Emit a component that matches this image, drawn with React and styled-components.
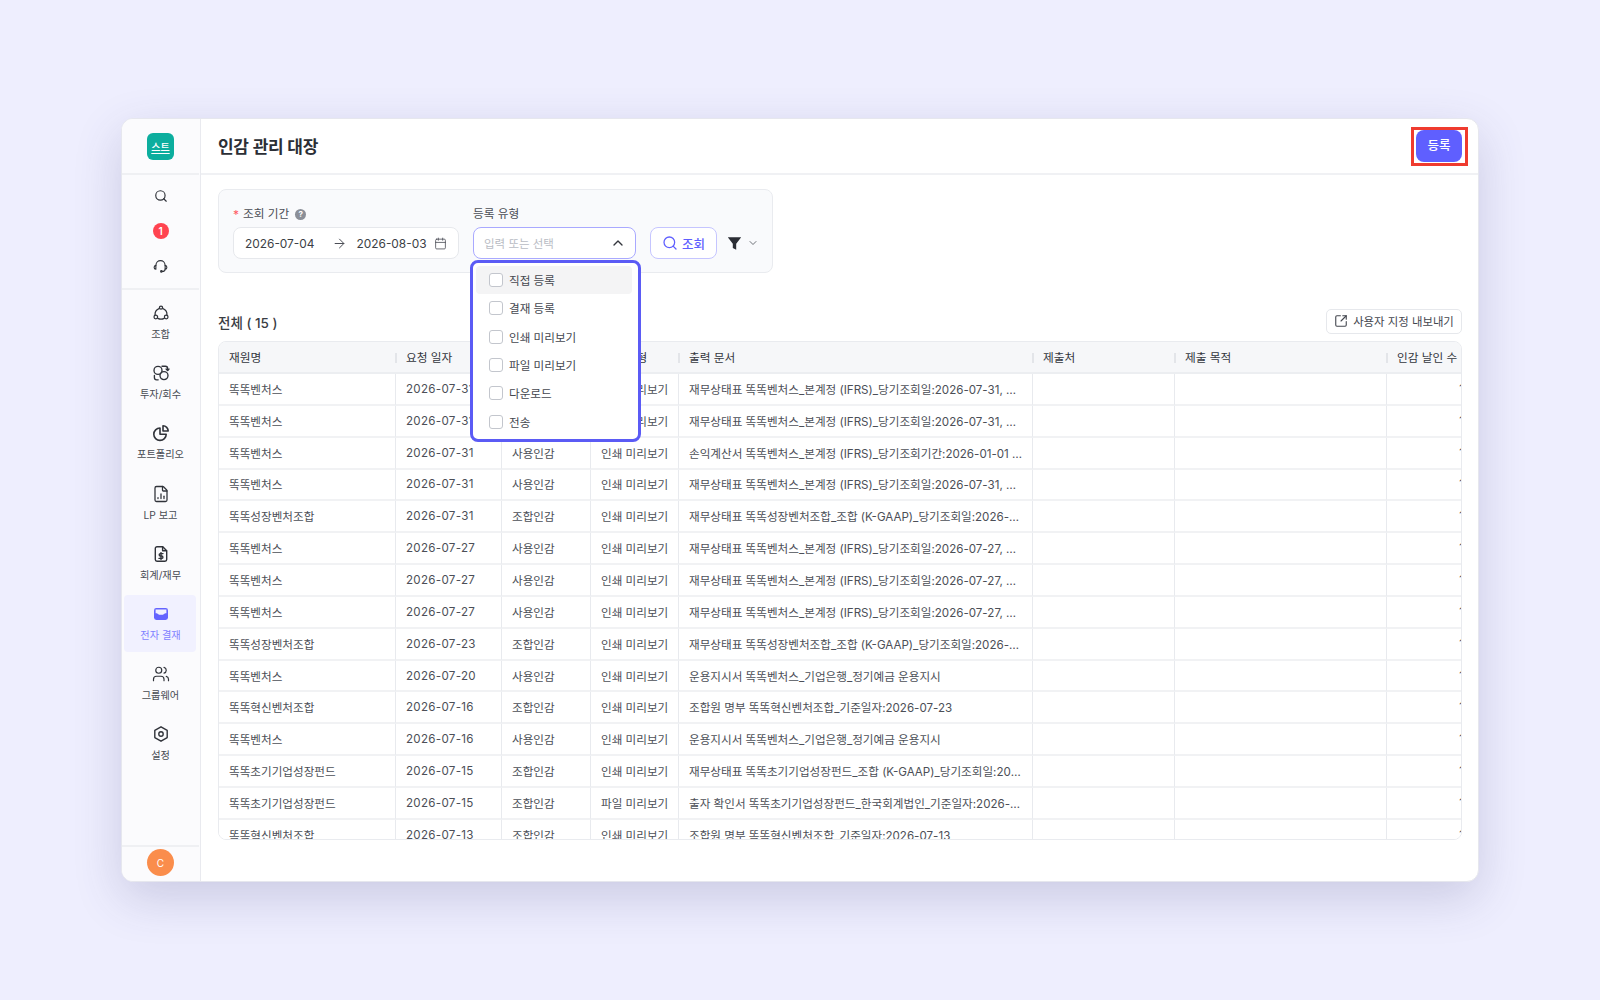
import React from 'react';
import styled, { createGlobalStyle } from 'styled-components';
import { Search, ArrowRight, Calendar, ChevronUp, ChevronDown, SquareArrowOutUpRight, FileChartColumn, Users } from 'lucide-react';

const Global = createGlobalStyle`
  * { box-sizing: border-box; }
  html, body { margin: 0; padding: 0; }
  body { font-family: Inter, "Noto Sans CJK KR", "Noto Sans", sans-serif; background: #eeeefe; color: #333740; }
`;

const Page = styled.div`
  width: 1600px; height: 1000px; display: flex; align-items: flex-start; justify-content: center; padding-top: 118px;
  background: #eeeefe; overflow: hidden;
`;
const Window = styled.div`
  width: 1358px; height: 764px; display: flex; background: #fff; border-radius: 12px;
  border: 1px solid #e6e7ee; overflow: hidden; box-shadow: 0 16px 48px rgba(60, 60, 120, 0.2);
`;
const Sidebar = styled.aside`
  width: 79px; flex: none; display: flex; flex-direction: column; background: #fbfbfd; border-right: 1px solid #e9eaef;
  padding-right: 1px;
`;
const LogoArea = styled.div`
  height: 56px; flex: none; display: flex; align-items: center; justify-content: center; border-bottom: 2px solid #eff0f3;
`;
const Logo = styled.div`
  width: 27px; height: 27px; border-radius: 6px; background: #0cae9e; color: #fff; font-size: 10px; font-weight: 500;
  display: flex; align-items: center; justify-content: center; text-decoration: underline; text-underline-offset: 2px;
`;
const Tools = styled.div`
  display: flex; flex-direction: column; padding: 3px 0; border-bottom: 2px solid #eff0f3;
`;
const Tool = styled.div`
  height: 35.5px; display: flex; align-items: center; justify-content: center; color: #2f3239;
`;
const Badge = styled.span`
  width: 16px; height: 16px; border-radius: 50%; background: #ff4450; color: #fff; font-size: 10px; font-weight: 600;
  display: flex; align-items: center; justify-content: center;
`;
const Nav = styled.nav`
  flex: 1; display: flex; flex-direction: column; gap: 3.2px; padding: 4.5px 3px 0 2px;
`;
const NavItem = styled.div`
  height: 57px; border-radius: 4px; display: flex; flex-direction: column; align-items: center; padding: 10px 0 0 1px; gap: 5px;
  background: ${p => (p.$active ? '#f1f1ff' : 'transparent')};
  color: ${p => (p.$active ? '#6464ff' : '#30333a')};
`;
const NavLabel = styled.span`
  font-size: 10.2px; line-height: 14px; color: ${p => (p.$active ? '#7f7fff' : '#484b53')};
`;
const SideFoot = styled.div`
  height: 36px; flex: none; display: flex; align-items: center; justify-content: center; border-top: 2px solid #eff0f3; padding-bottom: 3px;
`;
const Avatar = styled.div`
  width: 27px; height: 27px; border-radius: 50%; background: #fa8d4c; color: #fff; font-size: 10px;
  display: flex; align-items: center; justify-content: center;
`;
const Main = styled.main`
  flex: 1; min-width: 0; display: flex; flex-direction: column;
`;
const Header = styled.header`
  height: 56px; flex: none; display: flex; align-items: center; justify-content: space-between;
  padding: 0 16px 2px 17px; border-bottom: 2px solid #f0f1f4;
`;
const Title = styled.h1`
  margin: 0; font-size: 17px; font-weight: 600; color: #2b2e35; letter-spacing: -0.3px;
`;
const PrimaryWrap = styled.div`
  position: relative; margin-top: 2px;
`;
const Primary = styled.button`
  width: 46px; height: 32px; border: 0; border-radius: 8px; background: #5f5fff; color: #fff; font: 500 12.5px Inter, "Noto Sans CJK KR", sans-serif;
  display: block; padding: 0 0 3px;
`;
const Marker = styled.div`
  position: absolute; left: -5px; top: -3px; right: -6px; bottom: -4px; border: 3px solid #ef3b2f; pointer-events: none;
`;
const Content = styled.div`
  flex: 1; min-height: 0; display: flex; flex-direction: column; padding: 14px 16px 0 17px;
`;
const FilterBox = styled.div`
  position: relative; width: 555px; height: 84px; flex: none; display: flex; align-items: flex-end; gap: 14px;
  padding: 0 0 13px 14px; background: #f9fafc; border: 1px solid #e9ebef; border-radius: 8px;
`;
const Field = styled.div`
  position: relative; flex: none; display: flex; flex-direction: column; gap: 4px;
`;
const FieldLabel = styled.label`
  display: flex; align-items: center; gap: 4px; font-size: 11.7px; line-height: 17px; color: #4b4e56;
`;
const Req = styled.span`
  color: #ff5a63; font-size: 12px;
`;
const Help = styled.span`
  width: 11px; height: 11px; margin-left: 2px; border-radius: 50%; background: #8b8f98; color: #fff; font-size: 8px; font-weight: 700;
  display: flex; align-items: center; justify-content: center;
`;
const RangeInput = styled.div`
  width: 226px; height: 32px; display: flex; align-items: center; padding: 0 0 0 11px; background: #fff; border: 1px solid #e6e8ec;
  border-radius: 8px; font-size: 11.9px; color: #3c3f46; white-space: nowrap;
`;
const RangeArrow = styled.span`
  display: flex; margin: 0 10px 0 17px; color: #4b4e56;
`;
const RangeIcon = styled.span`
  display: flex; margin-left: 7px; color: #4b4e56;
`;
const SelectInput = styled.div`
  width: 163px; height: 32px; display: flex; align-items: center; justify-content: space-between; padding: 0 9px 0 10px;
  background: #fff; border: 1px solid #a9a9ff; border-radius: 8px; font-size: 11.5px; color: #b9bcc4;
`;
const SelectArrow = styled.span`
  display: flex; color: #33363d;
`;
const SearchBtn = styled.button`
  width: 67px; height: 32px; flex: none; display: flex; align-items: center; justify-content: center; gap: 4px; background: #fff;
  border: 1px solid #c5c5ff; border-radius: 8px; color: #5f5fff; font: 500 12.5px Inter, "Noto Sans CJK KR", sans-serif; padding: 0;
`;
const FilterToggle = styled.div`
  height: 32px; flex: none; display: flex; align-items: center; gap: 5px; color: #2b2e35; margin-left: -4px;
`;
const Dropdown = styled.ul`
  position: absolute; left: -3px; top: 54px; width: 171px; height: 182px; margin: 0; padding: 3px 6px 3px 3px; list-style: none; z-index: 5;
  background: #fff; border: 3px solid #5b5bf5; border-radius: 8px; display: flex; flex-direction: column;
`;
const Option = styled.li`
  height: 28.3px; flex: none; display: flex; align-items: center; gap: 6px; padding-left: 13px; border-radius: 4px;
  font-size: 11.6px; color: #44474f; background: ${p => (p.$hover ? '#f4f4f5' : 'transparent')};
`;
const Check = styled.span`
  width: 14px; height: 14px; flex: none; background: #fff; border: 1px solid #c3c6cd; border-radius: 3px;
`;
const TableBar = styled.div`
  height: 25px; flex: none; margin-top: 36px; display: flex; align-items: center; justify-content: space-between;
`;
const Total = styled.div`
  font-size: 13.5px; font-weight: 500; color: #3a3d44;
`;
const Export = styled.button`
  height: 25px; width: 136px; display: flex; align-items: center; justify-content: center; gap: 5px; background: #fff; border: 1px solid #e6e8ec;
  border-radius: 5px; color: #44474f; font: 400 11.4px Inter, "Noto Sans CJK KR", sans-serif; padding: 0 0 1px;
`;
const TableWrap = styled.div`
  margin-top: 7px; width: 1244px; height: 499px; flex: none; overflow: hidden; border: 1px solid #e9ebef; border-radius: 8px;
`;
const Table = styled.table`
  width: 1253px; table-layout: fixed; border-collapse: separate; border-spacing: 0;
`;
const Th = styled.th`
  height: 32px; padding: 0 0 1px 10px; text-align: left; font-size: 11.7px; font-weight: 400; color: #33363d;
  background: #f6f7f9; border-bottom: 2px solid #eceef1; white-space: nowrap; position: relative;
  &:not(:first-child)::before {
    content: ''; position: absolute; left: -1px; top: 11px; width: 2px; height: 10px; background: #e3e5e9;
  }
`;
const Td = styled.td`
  height: 31.85px; padding: 0 8px 0 10px; font-size: 11.6px; color: #4c4f57; background: #fff; white-space: nowrap; overflow: hidden;
  text-overflow: ellipsis; text-align: ${p => (p.$right ? 'right' : 'left')};
  border-bottom: 2px solid #f1f2f4;
  &:not(:last-child) { border-right: 1px solid #e8eaee; }
`;
const DateText = styled.span`
  letter-spacing: 0.3px;
`;

const columns = [
  { w: 177, label: '재원명' }, { w: 106, label: '요청 일자' }, { w: 89, label: '인감 유형' }, { w: 88, label: '출력 유형' },
  { w: 354, label: '출력 문서' }, { w: 142, label: '제출처' }, { w: 212, label: '제출 목적' }, { w: 85, label: '인감 날인 수' },
];
const V = '똑똑벤처스', G = '똑똑성장벤처조합', H = '똑똑혁신벤처조합', C = '똑똑초기기업성장펀드';
const U = '사용인감', J = '조합인감', P = '인쇄 미리보기', F = '파일 미리보기';
const bs = (d) => `재무상태표 똑똑벤처스_본계정 (IFRS)_당기조회일:${d}, 기준 통화:KRW`;
const rows = [
  [V, '2026-07-31', U, P, bs('2026-07-31')],
  [V, '2026-07-31', U, P, bs('2026-07-31')],
  [V, '2026-07-31', U, P, '손익계산서 똑똑벤처스_본계정 (IFRS)_당기조회기간:2026-01-01 ~ 2026-07-31'],
  [V, '2026-07-31', U, P, bs('2026-07-31')],
  [G, '2026-07-31', J, P, '재무상태표 똑똑성장벤처조합_조합 (K-GAAP)_당기조회일:2026-07-31, 기준'],
  [V, '2026-07-27', U, P, bs('2026-07-27')],
  [V, '2026-07-27', U, P, bs('2026-07-27')],
  [V, '2026-07-27', U, P, bs('2026-07-27')],
  [G, '2026-07-23', J, P, '재무상태표 똑똑성장벤처조합_조합 (K-GAAP)_당기조회일:2026-07-23, 기준'],
  [V, '2026-07-20', U, P, '운용지시서 똑똑벤처스_기업은행_정기예금 운용지시'],
  [H, '2026-07-16', J, P, '조합원 명부 똑똑혁신벤처조합_기준일자:2026-07-23'],
  [V, '2026-07-16', U, P, '운용지시서 똑똑벤처스_기업은행_정기예금 운용지시'],
  [C, '2026-07-15', J, P, '재무상태표 똑똑초기기업성장펀드_조합 (K-GAAP)_당기조회일:2026-07-15, 기준'],
  [C, '2026-07-15', J, F, '출자 확인서 똑똑초기기업성장펀드_한국회계법인_기준일자:2026-07-15 기준'],
  [H, '2026-07-13', J, P, '조합원 명부 똑똑혁신벤처조합_기준일자:2026-07-13'],
];
const options = ['직접 등록', '결재 등록', '인쇄 미리보기', '파일 미리보기', '다운로드', '전송'];

const Ico = ({ children, size = 18, sw = 1.3, fill = 'none' }) => (
  <svg width={size} height={size} viewBox="0 0 18 18" fill={fill} stroke="currentColor" strokeWidth={sw} strokeLinecap="round" strokeLinejoin="round">{children}</svg>
);
const Headset = () => (
  <Ico size={17} sw={1.15}><path d="M4.2 8V7.6a4.8 4.8 0 0 1 9.6 0V8" /><path d="M3.8 7.8c-2 .6-2.2 3.9.3 4V8" /><path d="M14.2 7.8c2 .6 2.2 3.9-.3 4V8" /><path d="M13.9 11.8c0 1.4-1.3 2.4-3 2.4" /><circle cx="9.9" cy="14.2" r=".8" /></Ico>
);
const Fund = () => (
  <Ico sw={1.25}><circle cx="9" cy="3.6" r="1.6" /><circle cx="3.8" cy="13" r="1.8" /><circle cx="14.2" cy="13" r="1.8" /><path d="M7 4.6A6.2 6.2 0 0 0 3.1 11" /><path d="M11 4.6A6.2 6.2 0 0 1 14.9 11" /><path d="M5.8 14.4c2 1 4.4 1 6.4 0" /></Ico>
);
const Invest = () => (
  <Ico sw={1.35}><circle cx="6" cy="6.4" r="4" /><circle cx="12" cy="11.6" r="4" /><path d="M10 2.2h3.4c1.3 0 2.2 1 2.2 2.2v2" /><path d="m14.1 5 1.5 1.6L17 5" /><path d="M2.4 11.4v2.2c0 1.2 1 2.2 2.2 2.2h1.6" /></Ico>
);
const Pie = () => (
  <Ico sw={1.6}><path d="M8 4a6.2 6.2 0 1 0 6.2 6.2H8z" /><path d="M11 1.8a5.2 5.2 0 0 1 5.2 5.2H11z" /></Ico>
);
const Report = () => <FileChartColumn size={18} strokeWidth={1.7} />;
const Money = () => (
  <Ico sw={1.4}><path d="M10.8 1.8H5A1.7 1.7 0 0 0 3.3 3.5v11A1.7 1.7 0 0 0 5 16.2h8a1.7 1.7 0 0 0 1.7-1.7V5.7z" /><path d="M10.6 2v3.8h3.9" /><path d="M11 8.6H8.4a1.2 1.2 0 0 0 0 2.4h1.3a1.2 1.2 0 0 1 0 2.4H7" /><path d="M9 7.6v6.9" /></Ico>
);
const InboxFill = () => (
  <svg width="18" height="18" viewBox="0 0 18 18"><rect x="2" y="3" width="14" height="12" rx="2.4" fill="#6464ff" /><path d="M3.6 4.6h10.8v3.6c-1.6.1-2.6.4-3.2 1.6H6.8c-.6-1.2-1.6-1.5-3.2-1.6z" fill="#f1f1ff" /></svg>
);
const Cog = () => (
  <Ico sw={1.4}><path d="M9 1.8 15.2 5.4v7.2L9 16.2 2.8 12.6V5.4z" /><circle cx="9" cy="9" r="2.2" /></Ico>
);
const FunnelFill = () => (
  <svg width="15" height="15" viewBox="0 0 15 15" fill="currentColor"><path d="M.8 1.2h13.4L9.2 7.7v6.1L5.8 12V7.7z" /></svg>
);

const navItems = [
  ['조합', Fund], ['투자/회수', Invest], ['포트폴리오', Pie], ['LP 보고', Report], ['회계/재무', Money],
  ['전자 결재', InboxFill, true], ['그룹웨어', () => <Users size={18} strokeWidth={1.6} />], ['설정', Cog],
];

export default function App() {
  return (
    <Page>
      <Global />
      <Window>
        <Sidebar>
          <LogoArea><Logo>스트</Logo></LogoArea>
          <Tools>
            <Tool><Search size={14} strokeWidth={2} /></Tool>
            <Tool><Badge>1</Badge></Tool>
            <Tool><Headset /></Tool>
          </Tools>
          <Nav>
            {navItems.map(([label, Icon, active]) => (
              <NavItem key={label} $active={active}>
                <Icon />
                <NavLabel $active={active}>{label}</NavLabel>
              </NavItem>
            ))}
          </Nav>
          <SideFoot><Avatar>C</Avatar></SideFoot>
        </Sidebar>
        <Main>
          <Header>
            <Title>인감 관리 대장</Title>
            <PrimaryWrap>
              <Primary>등록</Primary>
              <Marker />
            </PrimaryWrap>
          </Header>
          <Content>
            <FilterBox>
              <Field>
                <FieldLabel><Req>*</Req>조회 기간<Help>?</Help></FieldLabel>
                <RangeInput>
                  2026-07-04
                  <RangeArrow><ArrowRight size={15} strokeWidth={1.6} /></RangeArrow>
                  2026-08-03
                  <RangeIcon><Calendar size={13} strokeWidth={1.5} /></RangeIcon>
                </RangeInput>
              </Field>
              <Field>
                <FieldLabel>등록 유형</FieldLabel>
                <SelectInput>
                  입력 또는 선택
                  <SelectArrow><ChevronUp size={16} strokeWidth={2} /></SelectArrow>
                </SelectInput>
                <Dropdown>
                  {options.map((o, i) => (
                    <Option key={o} $hover={i === 0}><Check />{o}</Option>
                  ))}
                </Dropdown>
              </Field>
              <SearchBtn><Search size={16} strokeWidth={1.9} />조회</SearchBtn>
              <FilterToggle><FunnelFill /><ChevronDown size={12} strokeWidth={1.7} color="#555860" /></FilterToggle>
            </FilterBox>
            <TableBar>
              <Total>전체 ( 15 )</Total>
              <Export><SquareArrowOutUpRight size={14} strokeWidth={1.9} />사용자 지정 내보내기</Export>
            </TableBar>
            <TableWrap>
              <Table>
                <colgroup>{columns.map(c => <col key={c.label} style={{ width: c.w }} />)}</colgroup>
                <thead>
                  <tr>{columns.map(c => <Th key={c.label}>{c.label}</Th>)}</tr>
                </thead>
                <tbody>
                  {rows.map((r, i) => (
                    <tr key={i}>
                      <Td>{r[0]}</Td>
                      <Td><DateText>{r[1]}</DateText></Td>
                      <Td>{r[2]}</Td>
                      <Td>{r[3]}</Td>
                      <Td>{r[4]}</Td>
                      <Td />
                      <Td />
                      <Td $right>1</Td>
                    </tr>
                  ))}
                </tbody>
              </Table>
            </TableWrap>
          </Content>
        </Main>
      </Window>
    </Page>
  );
}
